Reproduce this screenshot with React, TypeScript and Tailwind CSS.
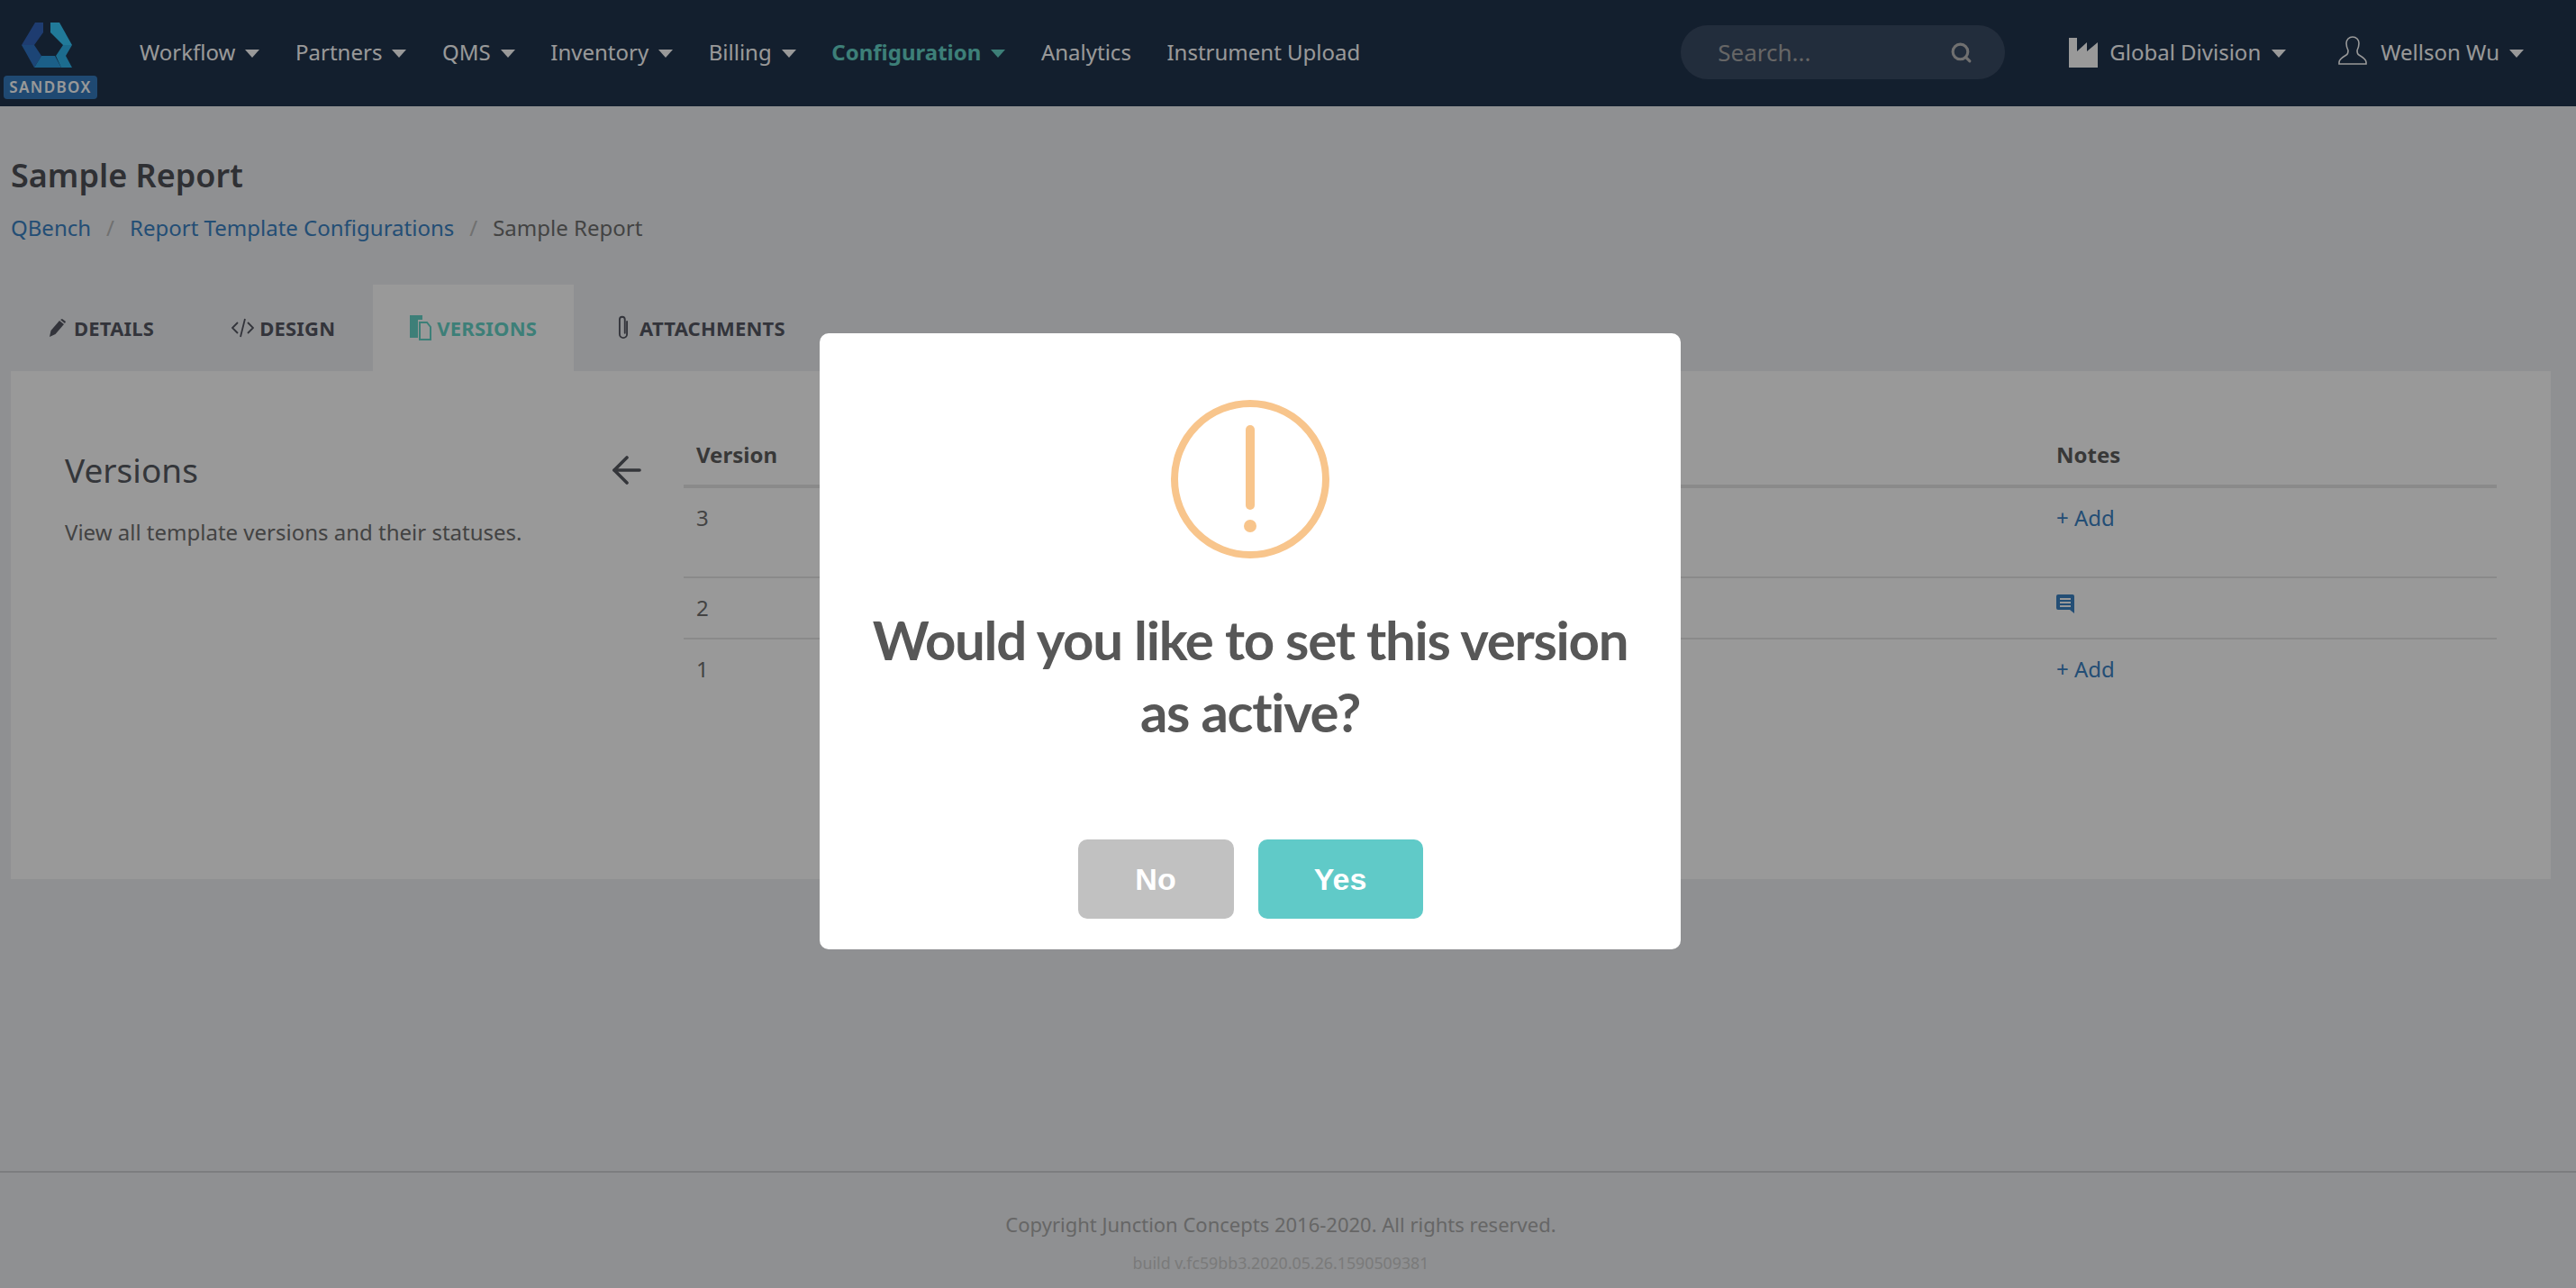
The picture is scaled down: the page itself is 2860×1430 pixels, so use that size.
import { ArrowLeft, Search } from "lucide-react";

const navItems = [
  { label: "Workflow", caret: true },
  { label: "Partners", caret: true },
  { label: "QMS", caret: true },
  { label: "Inventory", caret: true },
  { label: "Billing", caret: true },
  { label: "Configuration", caret: true, active: true },
  { label: "Analytics" },
  { label: "Instrument Upload" },
];

function Caret({ className = "border-t-white" }: { className?: string }) {
  return (
    <span
      className={`inline-block w-0 h-0 border-x-[8px] border-x-transparent border-t-[9px] mt-[3px] ${className}`}
    />
  );
}

function Logo() {
  return (
    <svg viewBox="24 25 56 50" className="w-[56px] h-[50px]">
      <polygon points="39,25 48,25 48,36 38,50 24,50" fill="#3364bb" />
      <polygon points="24,50 38,50 46,62 38,75" fill="#3073c5" />
      <polygon points="46,62 61,62 68,75 38,75" fill="#2d9ee3" />
      <polygon points="62,62 70,50 80,50 73,62 80,75 68,75" fill="#2fb4ed" />
      <polygon points="56,25 66,25 80,50 70,50 56,36" fill="#37cbff" />
    </svg>
  );
}

function FactoryIcon() {
  return (
    <svg viewBox="0 0 32 33" className="w-[32px] h-[33px]" fill="#fff">
      <path d="M0 0h9v15l11-10v10L32 5v28H0z" />
    </svg>
  );
}

function UserIcon() {
  return (
    <svg viewBox="0 0 32 32" className="w-[32px] h-[32px]" fill="none" stroke="#fff" strokeWidth="1.6">
      <path d="M1 31h30v-2c0-3-3-5-8-8-2-1-2-3-2-5 1-2 2-4 2-8 0-4-3-7-7-7S9 4 9 8c0 4 1 6 2 8 0 2 0 4-2 5-5 3-8 5-8 8z" />
    </svg>
  );
}

function NoteIcon() {
  return (
    <svg viewBox="0 0 20 21" className="w-[20px] h-[21px] mt-[3px]">
      <path d="M2 0h16a2 2 0 0 1 2 2v19l-5-4H2a2 2 0 0 1-2-2V2a2 2 0 0 1 2-2z" fill="#3b82c4" />
      <path d="M4 4h12v2H4zM4 8h12v2H4zM4 12h12v2H4z" fill="#fff" />
    </svg>
  );
}

function Navbar() {
  return (
    <header className="h-[118px] pb-[2px] bg-[#20344d] flex items-center shrink-0">
      <div className="w-[112px] h-full pl-[4px] pt-[25px] relative shrink-0">
        <div className="ml-[20px]">
          <Logo />
        </div>
        <div className="absolute left-[4px] top-[84px] w-[104px] h-[26px] bg-[#347bbe] rounded-[4px] flex items-center justify-center text-white text-[17px] font-semibold tracking-[1.4px]">
          SANDBOX
        </div>
      </div>
      <nav className="flex items-center gap-[39.6px] ml-[43px] text-[24px] text-white">
        {navItems.map((item) => (
          <span
            key={item.label}
            className={`flex items-center gap-[11px] ${item.active ? "text-[#66d4c8] font-bold" : ""}`}
          >
            {item.label}
            {item.caret && <Caret className={item.active ? "border-t-[#66d4c8]" : "border-t-white"} />}
          </span>
        ))}
      </nav>
      <div className="ml-auto flex items-center">
        <div className="w-[360px] h-[60px] rounded-[30px] bg-[#3a4b64] flex items-center justify-between pl-[41px] pr-[36px] text-[26px] text-[#aaa]">
          <span>Search...</span>
          <Search size={25} strokeWidth={3} className="text-[#bbb]" />
        </div>
        <div className="flex items-center ml-[71px] text-[24px] text-white">
          <FactoryIcon />
          <span className="ml-[13px]">Global Division</span>
          <Caret className="border-t-white ml-[12px]" />
        </div>
        <div className="flex items-center ml-[58px] mr-[58px] text-[24px] text-white">
          <span className="-mt-[4px]">
            <UserIcon />
          </span>
          <span className="ml-[15px]">Wellson Wu</span>
          <Caret className="border-t-white ml-[11px]" />
        </div>
      </div>
    </header>
  );
}

function Tabs() {
  const tabClass = "flex items-center h-full font-bold text-[22px] tracking-[0.2px]";
  return (
    <div className="flex h-[96px] mt-[45px] ml-[12px] text-[#555863]">
      <div className={`${tabClass} pl-[43px] pr-[43px]`}>
        <svg viewBox="0 0 18 20" className="w-[18px] h-[20px] mr-[9px]" fill="#555863">
          <path d="M0 20l1.5-7L11 2l5 4-9.500 11z" />
          <path d="M12 1l2-1 4 3-1 2z" />
        </svg>
        DETAILS
      </div>
      <div className={`${tabClass} pl-[43px] pr-[42px]`}>
        <svg viewBox="0 0 25 22" className="w-[25px] h-[22px] mr-[6px]" fill="none" stroke="#555863" strokeWidth="1.800">
          <path d="M7 5l-6 6 6 6M18 5l6 6-6 6M15 1l-5 20" />
        </svg>
        DESIGN
      </div>
      <div className={`${tabClass} bg-[#fff] text-[#66d4c8] pl-[41px] pr-[41px]`}>
        <svg viewBox="0 0 24 28" className="w-[24px] h-[28px] mr-[6px]">
          <path d="M0 0h14v5H9v20H0z" fill="#66d4c8" />
          <path d="M11 8h8l4 5v14H11z" fill="#fff" stroke="#66d4c8" strokeWidth="2" />
        </svg>
        VERSIONS
      </div>
      <div className={`${tabClass} pl-[48px]`}>
        <svg viewBox="0 0 12 24" className="w-[14px] h-[28px] mr-[11px]" fill="none" stroke="#555863" strokeWidth="1.600" strokeLinecap="round">
          <path d="M9.500 6v12a3.500 3.500 0 0 1-7 0V4a2.500 2.500 0 0 1 5 0v13" />
        </svg>
        ATTACHMENTS
      </div>
    </div>
  );
}

function VersionsPanel() {
  return (
    <section className="ml-[12px] mr-[28px] h-[564px] bg-white flex pt-[64px] text-[#707070]">
      <div className="w-[747px] pl-[60px] pr-[39px] shrink-0">
        <div className="flex items-center justify-between h-[64px] mt-[14px]">
          <h2 className="text-[37px] text-[#585a62]">Versions</h2>
          <ArrowLeft size={48} strokeWidth={1.8} className="text-[#585a62]" />
        </div>
        <p className="mt-[19px] text-[24px]">View all template versions and their statuses.</p>
      </div>
      <div className="w-[2013px] text-[24px]">
        <div className="h-[66px] border-b-[4px] border-[#e6e6e6] flex pl-[14px] font-bold text-[#5e5e5e]">
          <span className="w-[1510px] pt-[11px]">Version</span>
          <span className="pt-[11px]">Notes</span>
        </div>
        <Row version="3" height="h-[100px]" note={<span>+ Add</span>} />
        <Row version="2" height="h-[68px]" note={<NoteIcon />} />
        <Row version="1" height="h-[68px]" note={<span>+ Add</span>} last />
      </div>
    </section>
  );
}

function Row({ version, height, note, last }: { version: string; height: string; note: React.ReactNode; last?: boolean }) {
  return (
    <div className={`${height} flex pl-[14px] pt-[15px] ${last ? "" : "border-b-2 border-[#e6e6e6]"}`}>
      <span className="w-[1510px]">{version}</span>
      <span className="text-[#3b82c4]">{note}</span>
    </div>
  );
}

function Modal() {
  return (
    <div className="fixed inset-0 bg-black/40 flex justify-center pt-[370px] pr-[84px]">
      <div className="w-[956px] h-[684px] bg-white rounded-[10px] flex flex-col items-center pt-[74px]">
        <div className="w-[176px] h-[176px] rounded-full border-[8px] border-[#f8c58c] flex flex-col items-center pt-[20px] shrink-0">
          <span className="w-[10px] h-[94px] rounded-full bg-[#f8c58c]" />
          <span className="w-[14px] h-[14px] rounded-full bg-[#f8c58c] mt-[11px]" />
        </div>
        <h2 className="mt-[50px] font-['Lato',sans-serif] text-[60px] leading-[80px] font-bold tracking-[-1.3px] text-[#575757] text-center px-[50px]">
          Would you like to set this version as active?
        </h2>
        <div className="flex gap-[27px] mt-[102px] font-['Liberation_Sans',sans-serif] font-bold text-[34px] text-white">
          <button className="w-[173px] h-[88px] rounded-[10px] bg-[#c1c1c1]">No</button>
          <button className="w-[183px] h-[88px] rounded-[10px] bg-[#60cac8]">Yes</button>
        </div>
      </div>
    </div>
  );
}

export default function App() {
  return (
    <div className="h-[1430px] overflow-hidden flex flex-col bg-[#eef0f3] font-['Noto_Sans',sans-serif]">
      <Navbar />
      <main className="flex-1">
        <div className="pl-[12px] pt-[52px]">
          <h1 className="text-[36px] leading-[50px] font-semibold text-[#4f5158]">Sample Report</h1>
          <div className="flex items-center mt-[15px] text-[24px] leading-[36px]">
            <span className="text-[#3b82c4]">QBench</span>
            <span className="mx-[17px] text-[#bbb]">/</span>
            <span className="text-[#3b82c4]">Report Template Configurations</span>
            <span className="mx-[17px] text-[#bbb]">/</span>
            <span className="text-[#707070]">Sample Report</span>
          </div>
        </div>
        <Tabs />
        <VersionsPanel />
      </main>
      <footer className="h-[130px] border-t-2 border-[#cfd0d4] shrink-0 flex flex-col items-center pr-[16px]">
        <p className="mt-[40px] text-[22px] leading-[34px] text-[#aaa]">Copyright Junction Concepts 2016-2020. All rights reserved.</p>
        <p className="mt-[14px] text-[17.8px] leading-[24px] text-[#ccc]">build v.fc59bb3.2020.05.26.1590509381</p>
      </footer>
      <Modal />
    </div>
  );
}
